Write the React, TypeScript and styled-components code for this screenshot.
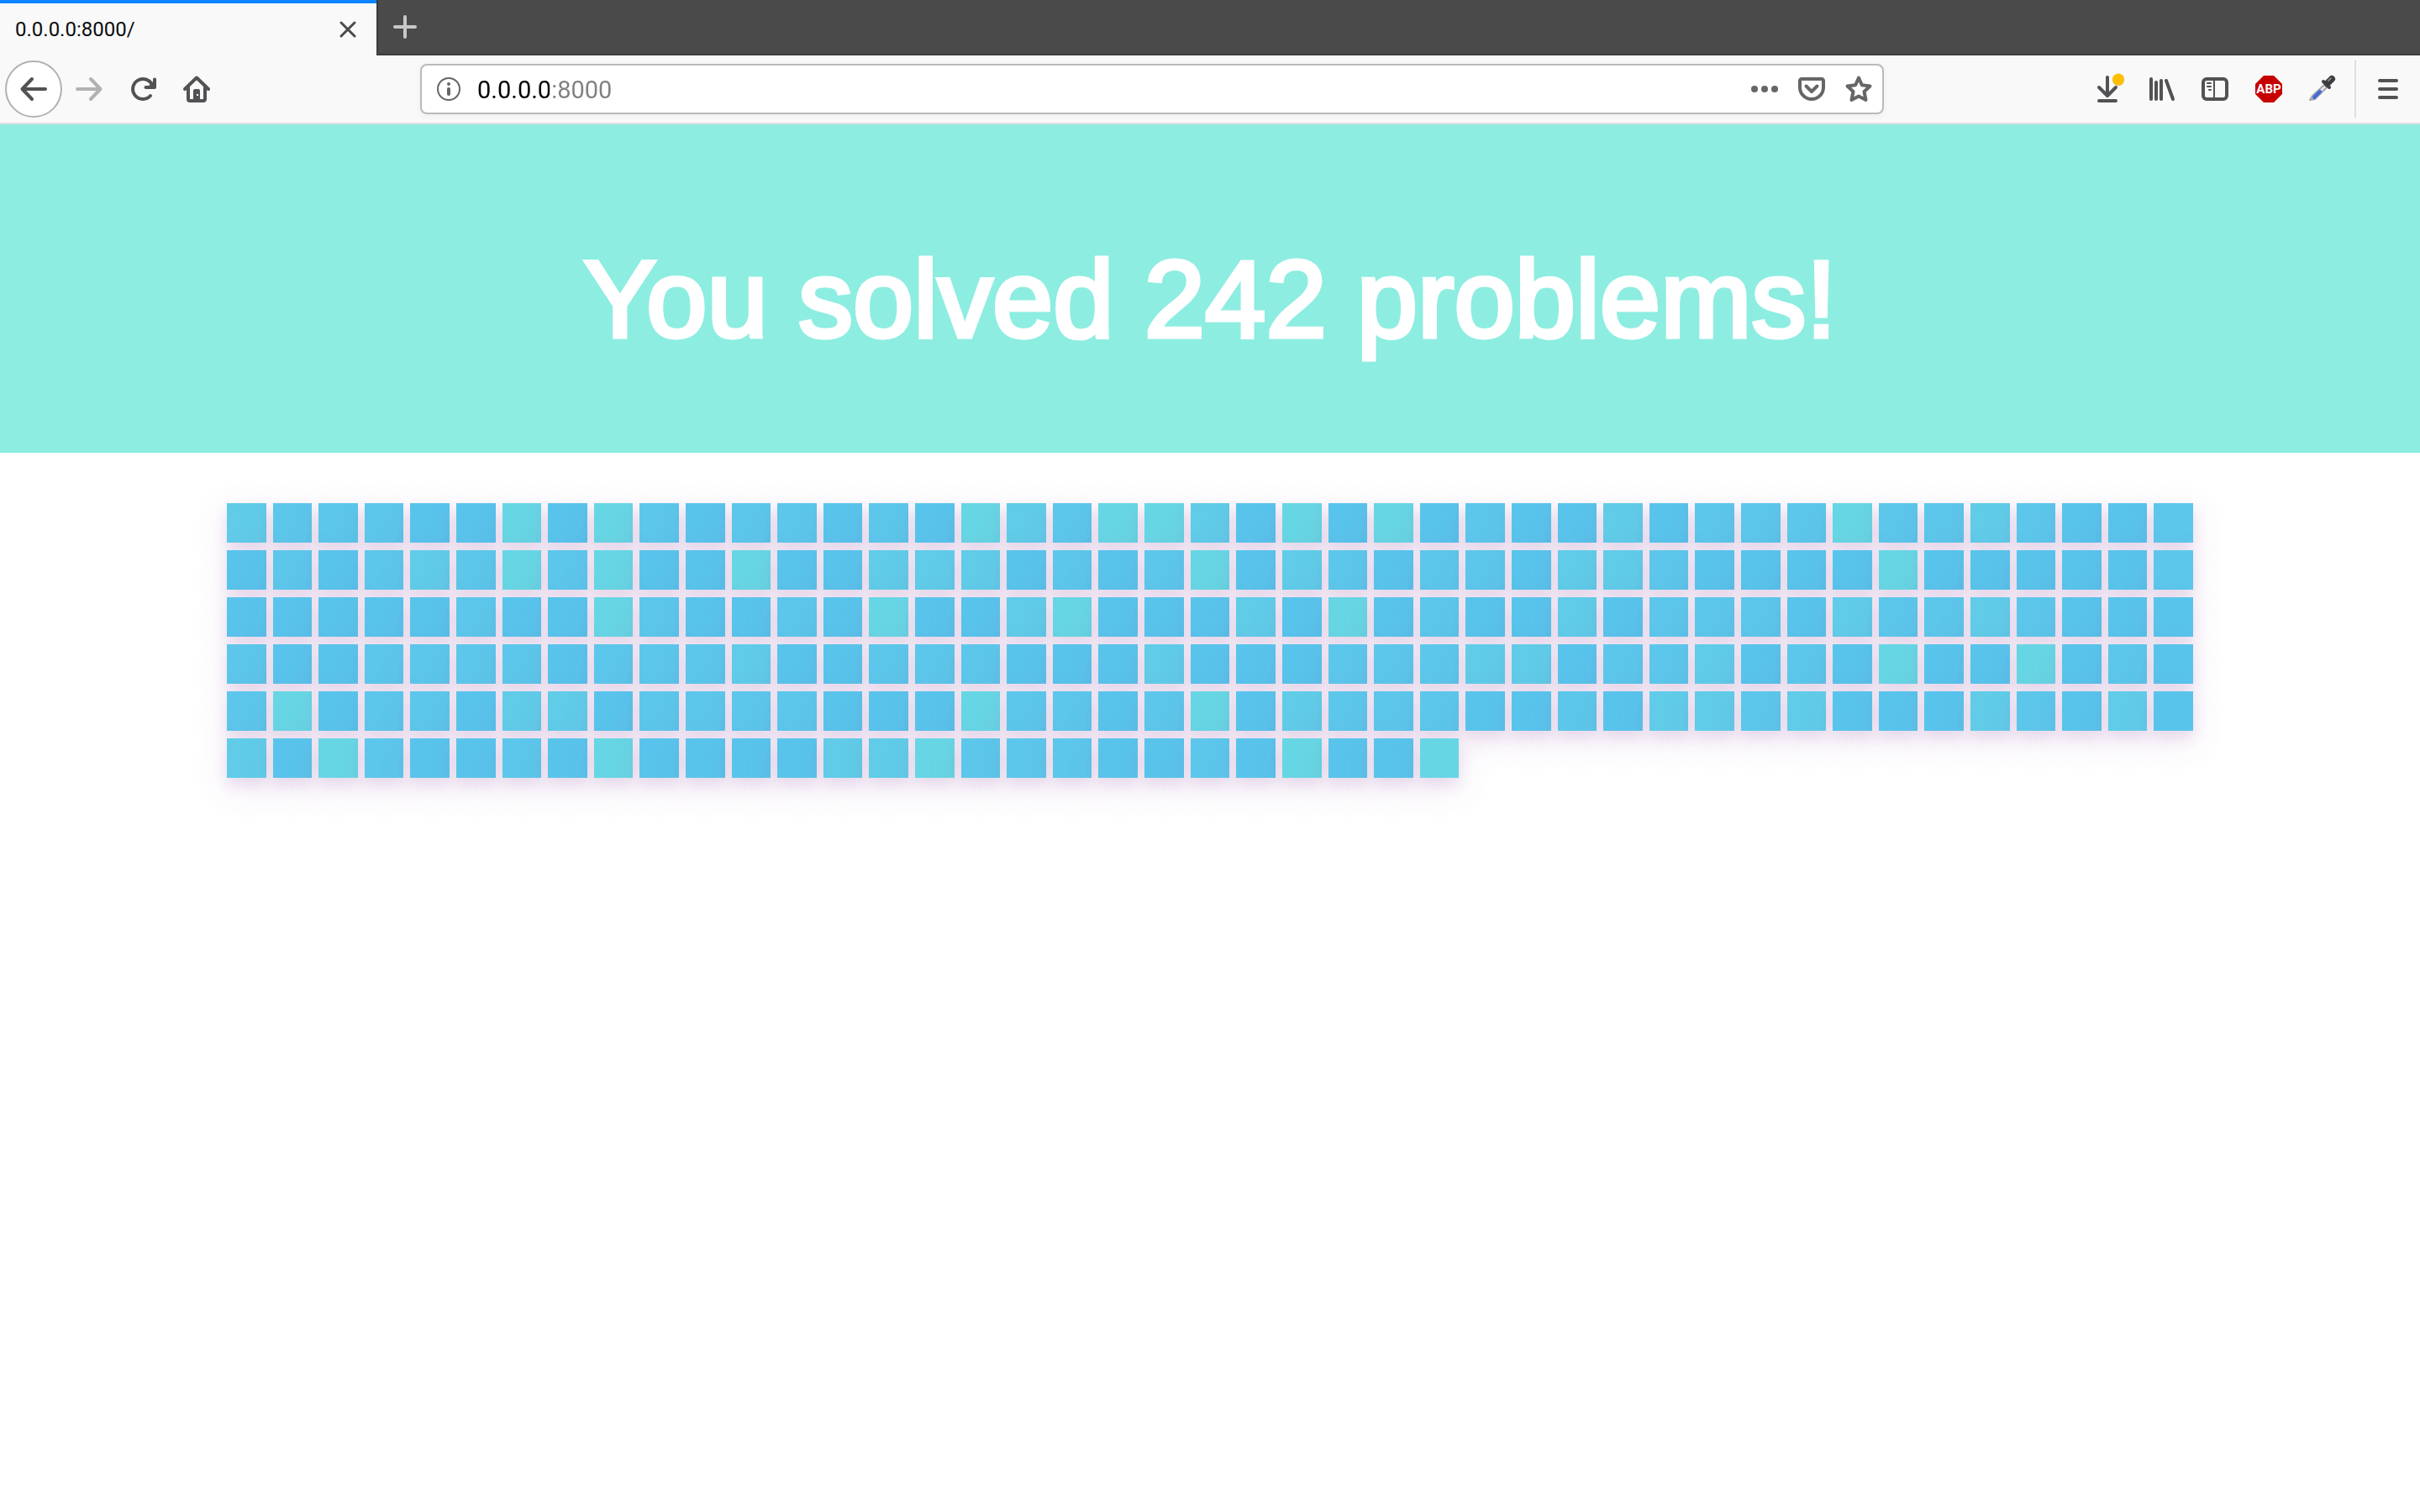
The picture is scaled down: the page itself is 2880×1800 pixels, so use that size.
import React from "react";
import styled, { createGlobalStyle } from "styled-components";

const GlobalStyle = createGlobalStyle`
  *, *::before, *::after { box-sizing: border-box; }
  body {
    margin: 0;
    background: #fff;
    font-family: Roboto, "Noto Sans", sans-serif;
  }
  button, input { font: inherit; }
`;

const TabStrip = styled.header`
  display: flex;
  height: 66px;
  background: #4a4a4a;
`;

const Tab = styled.div`
  display: flex;
  align-items: center;
  justify-content: space-between;
  width: 448px;
  padding: 0 20px 0 18px;
  border-top: 4px solid #0a84ff;
  background: #f9f9fa;
  color: #0c0c0d;
  font-size: 24px;
`;

const TabLabel = styled.span`
  line-height: 28px;
`;

const PlainButton = styled.button`
  display: flex;
  align-items: center;
  justify-content: center;
  padding: 0;
  border: 0;
  background: transparent;
`;

const CloseButton = styled(PlainButton)`
  width: 28px;
  height: 28px;
  color: #4a4a4b;
`;

const TabStripRest = styled.div`
  flex: 1;
  border-left: 2px solid #3b3b3b;
  border-bottom: 2px solid #3b3b3b;
`;

const NewTabButton = styled(PlainButton)`
  width: 64px;
  height: 64px;
  color: #c8c8c8;
`;

const Toolbar = styled.nav`
  display: flex;
  align-items: center;
  height: 82px;
  padding: 0 6px;
  border-bottom: 2px solid #e0e0e1;
  background: #f9f9fa;
`;

const BackButton = styled(PlainButton)`
  width: 68px;
  height: 68px;
  border: 2px solid #b1b1b1;
  border-radius: 50%;
  background: #fff;
  color: #525254;
`;

const ToolButton = styled(PlainButton)<{ $faded?: boolean }>`
  width: 64px;
  height: 64px;
  color: ${(p) => (p.$faded ? "#b2b2b2" : "#525254")};
`;

const Spacer = styled.div`
  flex: 234;
`;

const AddressBar = styled.div`
  display: flex;
  flex: 1720;
  align-items: center;
  height: 60px;
  padding: 0 0 0 18px;
  border: 2px solid #bababb;
  border-radius: 8px;
  background: #fff;
  box-shadow: 0 2px 8px rgba(0, 0, 0, 0.05);
  color: #666;
`;

const AddressInput = styled.input`
  flex: 1;
  min-width: 0;
  height: 40px;
  margin-left: 20px;
  padding: 2px 0 0;
  border: 0;
  outline: 0;
  background: linear-gradient(90deg, #000 86px, #808080 86px);
  background-clip: text;
  -webkit-background-clip: text;
  -webkit-text-fill-color: transparent;
  color: #000;
  font-size: 29px;
`;

const AddressButton = styled(PlainButton)`
  width: 56px;
  height: 56px;
  color: #666;
`;

const Divider = styled.span`
  width: 2px;
  height: 68px;
  margin: 0 6px;
  background: #dfdfe0;
`;

const Icon = styled.svg`
  display: block;
  flex: none;
  overflow: visible;
  fill: none;
  stroke: currentColor;
  stroke-width: 4px;
  stroke-linecap: round;
  stroke-linejoin: round;
`;

const Banner = styled.section`
  padding: 130px 32px 105px;
  background: #8dede1;
`;

const Title = styled.h1`
  margin: 0;
  color: #fff;
  font-family: "Liberation Sans", Arial, sans-serif;
  font-size: 130px;
  font-weight: 400;
  line-height: 156px;
  text-align: center;
  -webkit-text-stroke: 5px #fff;
`;

const ProblemGrid = styled.ul`
  display: grid;
  grid-template-columns: repeat(43, 1fr);
  grid-auto-rows: 47px;
  gap: 9px 8px;
  margin: 0;
  padding: 60px 270px;
  list-style: none;
`;

const shades = ["#59c4eb", "#5cc7ea", "#60cce8", "#67d6e4"];

const Problem = styled.li<{ $level: number }>`
  background: ${(p) => shades[p.$level]};
  box-shadow:
    0 8px 16px rgba(150, 85, 170, 0.14),
    0 12px 40px rgba(150, 85, 170, 0.16);
`;

const levels = [
  "21110030310110" + "103213320303010" + "02011131121001",
  "01012131300300" + "222010130210110" + "22100003000001",
  "00000100310010" + "300230002030100" + "20111021121000",
  "10011110111200" + "111000200011122" + "01120103003010",
  "13011022011110" + "003110130211100" + "10221200021020",
  "20310010300002" + "2311100103003",
].join("");

const Back = () => (
  <Icon width="32" height="32" viewBox="0 0 32 32">
    <path d="M30 16H3M14 4 2.5 16 14 28" />
  </Icon>
);

const Forward = () => (
  <Icon width="32" height="32" viewBox="0 0 32 32">
    <path d="M2 16h27M18 4l11.5 12L18 28" />
  </Icon>
);

const Reload = () => (
  <Icon width="32" height="32" viewBox="0 0 32 32">
    <path d="M25 24A12 12 0 1 1 27 11" />
    <path d="M30 4.5V14H19.5" />
    <path d="M30 6v8h-8z" fill="currentColor" strokeWidth="1" />
  </Icon>
);

const Home = () => (
  <Icon width="32" height="32" viewBox="0 0 32 32">
    <path d="M2 16 16 2.5 30 16" />
    <path d="M6 14v14a2 2 0 0 0 2 2h16a2 2 0 0 0 2-2V14" />
    <path d="M12 30V18a2 2 0 0 1 2-2h4a2 2 0 0 1 2 2v12z" fill="currentColor" style={{ stroke: "none" }} />
    <rect x="16" y="22" width="2" height="2" fill="#f9f9fa" style={{ stroke: "none" }} />
  </Icon>
);

const Close = () => (
  <Icon width="20" height="20" viewBox="0 0 20 20">
    <path d="M2 2l16 16M18 2 2 18" style={{ strokeWidth: 3 }} />
  </Icon>
);

const Plus = () => (
  <Icon width="28" height="28" viewBox="0 0 28 28">
    <path d="M14 2v24M2 14h24" />
  </Icon>
);

const Info = () => (
  <Icon width="28" height="28" viewBox="0 0 28 28">
    <circle cx="14" cy="14" r="13" style={{ strokeWidth: 2 }} />
    <circle cx="14" cy="8" r="2" fill="currentColor" style={{ stroke: "none" }} />
    <path d="M14 14v6" />
  </Icon>
);

const Dots = () => (
  <Icon width="32" height="32" viewBox="0 0 32 32">
    <g fill="currentColor" style={{ stroke: "none" }}>
      <circle cx="4" cy="16" r="4" />
      <circle cx="16" cy="16" r="4" />
      <circle cx="28" cy="16" r="4" />
    </g>
  </Icon>
);

const Pocket = () => (
  <Icon width="32" height="32" viewBox="0 0 32 32">
    <path d="M4 4h24c1 0 2 1 2 2v8a14 14 0 0 1-28 0V6c0-1 1-2 2-2z" />
    <path d="M9.5 12.5 16 19l6.500-6.500" />
  </Icon>
);

const Star = () => (
  <Icon width="32" height="32" viewBox="0 0 32 32">
    <path d="M16 2.500 19.800 11.200 29.500 12.500 22.500 19 24.500 29 16 24.500 7.500 29 9.500 19 2.500 12.500 12.200 11.200z" />
  </Icon>
);

const Download = () => (
  <Icon width="32" height="32" viewBox="0 0 32 32">
    <path d="M16 2v21M6 14l10 10 10-10M6 30h20" />
    <circle cx="29" cy="5.500" r="7" fill="#d9c9a0" style={{ stroke: "none" }} />
    <circle cx="29" cy="4.500" r="7" fill="#ffbf00" style={{ stroke: "none" }} />
  </Icon>
);

const Library = () => (
  <Icon width="32" height="32" viewBox="0 0 32 32">
    <path d="M4 4v24M10 8v20M16 6v22M22 6l8 22" />
  </Icon>
);

const Sidebar = () => (
  <Icon width="32" height="32" viewBox="0 0 32 32">
    <rect x="2" y="4" width="28" height="24" rx="4" />
    <path d="M15 5v22M7 9h4M7 13h4M9 17h2" style={{ strokeWidth: 2 }} />
  </Icon>
);

const AdBlock = () => (
  <Icon width="32" height="32" viewBox="0 0 32 32">
    <path d="M10 0h12l10 10v12L22 32H10L0 22V10z" fill="#c70000" style={{ stroke: "none" }} />
    <text
      x="16"
      y="21"
      textAnchor="middle"
      fill="#fff"
      style={{ stroke: "none", font: "700 15px Roboto, sans-serif" }}
    >
      ABP
    </text>
  </Icon>
);

const Eyedropper = () => (
  <Icon width="32" height="32" viewBox="0 0 32 32">
    <path d="M18 11 4 24l-3 5 6-1 14-14z" fill="#eceef6" style={{ strokeWidth: 2, stroke: "#a4a4aa" }} />
    <path d="M13 19 6 26" style={{ stroke: "#4468d4", strokeWidth: 4 }} />
    <path d="M17 7l7 7" style={{ stroke: "#444", strokeWidth: 4 }} />
    <path d="M22 9l5-5" style={{ stroke: "#3c3c3e", strokeWidth: 8 }} />
    <path d="M23 6l3-3" style={{ stroke: "#85858a", strokeWidth: 2 }} />
  </Icon>
);

const Menu = () => (
  <Icon width="32" height="32" viewBox="0 0 32 32">
    <path d="M6 6h20M6 16h20M6 26h20" />
  </Icon>
);

export default function App() {
  return (
    <>
      <GlobalStyle />
      <TabStrip>
        <Tab>
          <TabLabel>0.0.0.0:8000/</TabLabel>
          <CloseButton aria-label="Close tab"><Close /></CloseButton>
        </Tab>
        <TabStripRest>
          <NewTabButton aria-label="New tab"><Plus /></NewTabButton>
        </TabStripRest>
      </TabStrip>
      <Toolbar>
        <BackButton aria-label="Back"><Back /></BackButton>
        <ToolButton $faded aria-label="Forward"><Forward /></ToolButton>
        <ToolButton aria-label="Reload"><Reload /></ToolButton>
        <ToolButton aria-label="Home"><Home /></ToolButton>
        <Spacer />
        <AddressBar>
          <Info />
          <AddressInput aria-label="Address" defaultValue="0.0.0.0:8000" spellCheck={false} />
          <AddressButton aria-label="Page actions"><Dots /></AddressButton>
          <AddressButton aria-label="Save to Pocket"><Pocket /></AddressButton>
          <AddressButton aria-label="Bookmark this page"><Star /></AddressButton>
        </AddressBar>
        <Spacer />
        <ToolButton aria-label="Downloads"><Download /></ToolButton>
        <ToolButton aria-label="Library"><Library /></ToolButton>
        <ToolButton aria-label="Sidebars"><Sidebar /></ToolButton>
        <ToolButton aria-label="Adblock Plus"><AdBlock /></ToolButton>
        <ToolButton aria-label="Color picker"><Eyedropper /></ToolButton>
        <Divider />
        <ToolButton aria-label="Open menu"><Menu /></ToolButton>
      </Toolbar>
      <main>
        <Banner>
          <Title>You solved 242 problems!</Title>
        </Banner>
        <ProblemGrid>
          {levels.split("").map((level, i) => (
            <Problem key={i} $level={Number(level)} />
          ))}
        </ProblemGrid>
      </main>
    </>
  );
}
